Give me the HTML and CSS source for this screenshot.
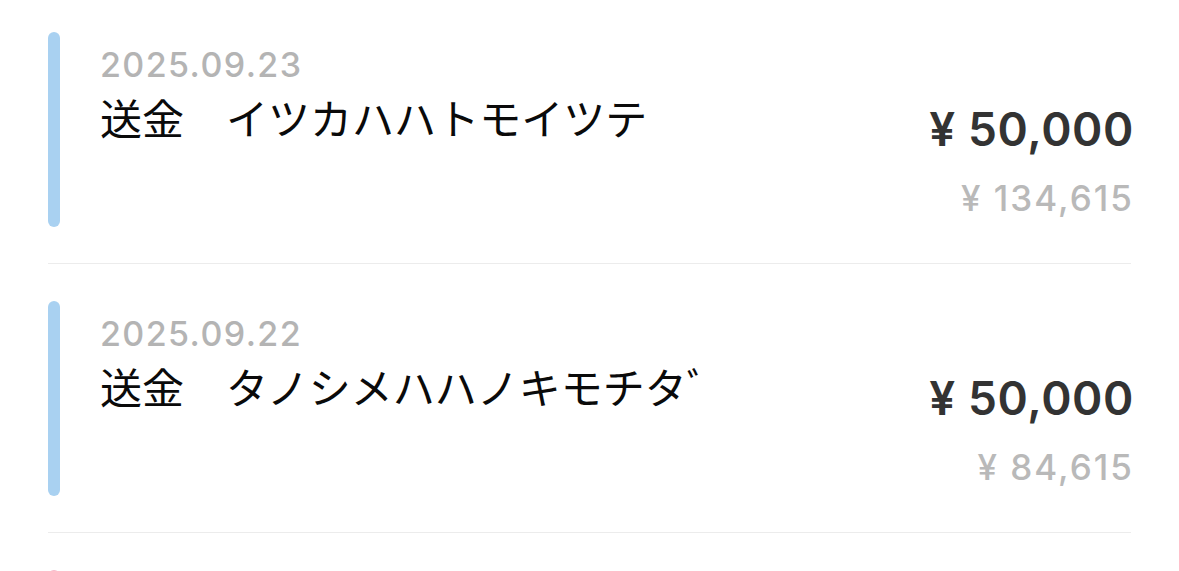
FILE: index.html
```html
<!DOCTYPE html>
<html lang="ja">
<head>
    <meta charset="UTF-8">
    <meta name="viewport" content="width=device-width, initial-scale=1.0">
    <title>送金履歴</title>
    <link rel="stylesheet" href="styles.css">
</head>
<body>
    <ul class="history">
        <!-- 送金 -->
        <li class="entry">
            <span class="marker marker-send"></span>
            <div class="entry-body">
                <div class="entry-date">2025.09.23</div>
                <div class="entry-title">送金　イツカハハトモイツテ</div>
            </div>
            <div class="entry-amounts">
                <div class="amount">¥ 50,000</div>
                <div class="balance">¥ 134,615</div>
            </div>
        </li>

        <li class="entry">
            <span class="marker marker-send"></span>
            <div class="entry-body">
                <div class="entry-date">2025.09.22</div>
                <div class="entry-title">送金　タノシメハハノキモチタﾞ</div>
            </div>
            <div class="entry-amounts">
                <div class="amount">¥ 50,000</div>
                <div class="balance">¥ 84,615</div>
            </div>
        </li>

        <!-- next entry, scrolled below the fold -->
        <li class="entry">
            <span class="marker marker-receive"></span>
        </li>
    </ul>
</body>
</html>
```

FILE: styles.css
```css
body {
    margin: 0;
    background-color: #fff;
    font-family: "Inter", "Noto Sans CJK JP", sans-serif;
    overflow: hidden;
}

.history {
    list-style: none;
    margin: -5px 48px 0;
    padding: 0;
}

.entry {
    display: flex;
    padding: 37px 0 36px;
    border-bottom: 1px solid #ececec;
    height: 195px;
}

.marker {
    flex: 0 0 12px;
    border-radius: 6px;
    margin-right: 40px;
}

.marker-send {
    background-color: #a9d1f1;
}

.marker-receive {
    background-color: #f5b9c9;
}

.entry-body {
    flex: 1;
}

.entry-date {
    margin-top: 13px;
    font-size: 34px;
    line-height: 40px;
    font-weight: 500;
    letter-spacing: 1.4px;
    color: #b4b4b4;
}

.entry-title {
    margin-top: 7px;
    font-family: "Noto Sans CJK JP", sans-serif;
    font-size: 42px;
    line-height: 50px;
    color: #0a0a0a;
}

.entry-amounts {
    text-align: right;
    margin-right: -3px;
}

.amount {
    margin-top: 70px;
    font-size: 46px;
    line-height: 54px;
    font-weight: 600;
    letter-spacing: 0.6px;
    color: #333;
}

.balance {
    margin-top: 22px;
    font-size: 35px;
    line-height: 40px;
    font-weight: 500;
    letter-spacing: 2px;
    color: #b9b9b9;
}
```
